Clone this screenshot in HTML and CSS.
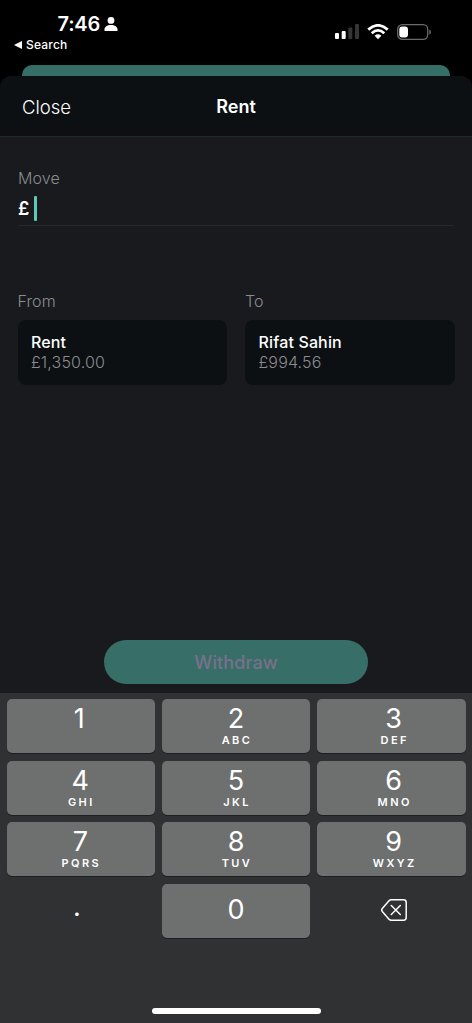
FILE: index.html
```html
<!DOCTYPE html>
<html lang="en">
<head>
<meta charset="utf-8">
<meta name="viewport" content="width=device-width, initial-scale=1">
<title>Rent</title>
<link rel="stylesheet" href="styles.css">
</head>
<body>
<div class="phone">
  <div class="status">
    <div class="status-left">
      <div class="clock"><span class="time">7:46</span>
        <svg class="person" width="14" height="14" viewBox="0 0 14 14"><circle cx="7" cy="3.400" r="3.400"/><path d="M.4 12.900C.4 9.900 3.200 8 7 8s6.600 1.900 6.600 4.900c0 .7-.4 1.100-1.100 1.100h-11C.8 14 .4 13.600 .4 12.900Z"/></svg>
      </div>
      <div class="back"><svg width="8" height="8" viewBox="0 0 8 8"><path d="M0 4 8 0v8Z"/></svg><span class="back-text">Search</span></div>
    </div>
    <div class="status-right">
      <svg width="24" height="16" viewBox="0 0 24 16"><rect x="0" y="9" width="4" height="6" rx="1"/><rect x="6.700" y="7" width="4" height="8" rx="1"/><g fill="#353535"><rect x="13.300" y="3.500" width="4" height="11.500" rx="1"/><rect x="20" y="0" width="4" height="15" rx="1"/></g></svg>
      <svg class="wifi" width="22" height="16" viewBox="0 0 22 16"><g fill="none" stroke="#fff" stroke-width="2.800"><path d="M1.300 5.600Q11-2.900 20.700 5.600"/><path d="M4.700 9.200Q11 3.600 17.300 9.200"/></g><path d="M7.600 11.700Q11 8.900 14.400 11.700L11 15.300Z"/></svg>
      <svg class="battery" width="35" height="16" viewBox="0 0 35 16"><rect x=".7" y=".7" width="30" height="14.600" rx="4.600" fill="none" stroke="#6b6b6b" stroke-width="1.300"/><rect x="2.300" y="2.500" width="8.700" height="11" rx="3"/><path d="M32.300 5.400c2.200.8 2.200 4.400 0 5.200Z" fill="#6b6b6b"/></svg>
    </div>
  </div>
  <div class="previous-sheet"></div>
  <main class="sheet">
    <header class="header"><span class="close">Close</span><span class="title">Rent</span><span></span></header>
    <section class="amount">
      <div class="label">Move</div>
      <div class="field"><span class="currency">£</span><span class="caret"></span></div>
    </section>
    <section class="accounts">
      <div class="account"><div class="label">From</div><div class="card"><div class="name">Rent</div><div class="balance">£1,350.00</div></div></div>
      <div class="account"><div class="label">To</div><div class="card"><div class="name">Rifat Sahin</div><div class="balance">£994.56</div></div></div>
    </section>
    <div class="withdraw">Withdraw</div>
  </main>
  <div class="keyboard">
    <div class="keys">
      <div class="key left"><span class="digit one">1</span></div>
      <div class="key"><span class="digit">2</span><span class="letters">ABC</span></div>
      <div class="key right"><span class="digit">3</span><span class="letters">DEF</span></div>
      <div class="key left"><span class="digit">4</span><span class="letters">GHI</span></div>
      <div class="key"><span class="digit">5</span><span class="letters">JKL</span></div>
      <div class="key right"><span class="digit">6</span><span class="letters">MNO</span></div>
      <div class="key left"><span class="digit">7</span><span class="letters">PQRS</span></div>
      <div class="key"><span class="digit">8</span><span class="letters">TUV</span></div>
      <div class="key right"><span class="digit">9</span><span class="letters">WXYZ</span></div>
      <div class="key plain"><span class="digit point">.</span></div>
      <div class="key zero"><span class="digit">0</span></div>
      <div class="key plain right"><svg class="delete" width="26" height="22" viewBox="0 0 26 22"><path d="M10.200.8H22.500Q25.200.8 25.200 3.500V18.500Q25.200 21.200 22.500 21.200H10.200Q9 21.200 8.200 20.400L1.300 12.500Q.2 11 1.300 9.500L8.200 1.600Q9 .8 10.200.8ZM10.300 6.500l9 9m0-9-9 9"/></svg></div>
    </div>
    <div class="home"></div>
  </div>
</div>
</body>
</html>
```
FILE: styles.css
```css
* { box-sizing: border-box; }
body { margin: 0; background: #000; font-family: Inter, "Liberation Sans", sans-serif; color: #fff; }
svg { display: block; fill: #fff; flex: none; }
.phone { width: 472px; height: 1023px; display: flex; flex-direction: column; overflow: hidden; background: #000; }
.status { height: 65px; display: flex; justify-content: space-between; padding: 0 40px 0 14px; flex: none; }
.clock { display: flex; align-items: center; height: 20px; margin: 14px 0 0 43.500px; gap: 4px; }
.time { font-size: 20px; line-height: 20px; font-weight: 600; letter-spacing: -0.200px; }
.back { display: flex; align-items: center; height: 14px; margin-top: 4px; gap: 4px; }
.back-text { font-size: 12px; line-height: 14px; font-weight: 500; letter-spacing: 0.200px; }
.status-right { display: flex; padding-top: 24px; }
.wifi { margin-left: 8px; }
.battery { margin-left: 8px; }
.previous-sheet { height: 11px; margin: 0 22px; background: #356e67; border-radius: 10px 10px 0 0; flex: none; }
.sheet { height: 617px; flex: none; display: flex; flex-direction: column; background: #191a1e; border-radius: 12px 12px 0 0; overflow: hidden; }
.header { height: 61px; display: grid; grid-template-columns: 1fr auto 1fr; align-items: center; padding: 1px 22px 0; background: #0c1013; border-bottom: 1px solid #25272a; font-size: 18px; line-height: 24px; }
.close { font-weight: 300; font-size: 18.500px; }
.title { font-weight: 600; padding-top: 1px; }
.amount { margin: 31px 18px 0; height: 58px; border-bottom: 1px solid #27282c; }
.label { font-size: 16px; line-height: 20px; font-weight: 300; color: #8b8c8f; letter-spacing: 0.100px; }
.field { display: flex; align-items: center; height: 25px; margin-top: 8px; gap: 5px; }
.currency { font-size: 18px; font-weight: 600; line-height: 24px; }
.caret { width: 2.500px; height: 25px; background: #5fc8b8; border-radius: 1px; }
.accounts { display: grid; grid-template-columns: 1fr 1fr; gap: 18px; margin: 65px 17.500px 0; }
.card { height: 65px; margin-top: 9px; padding: 12px 13.500px; border-radius: 8px; background: #0c1013; }
.name { font-size: 16px; line-height: 20px; font-weight: 500; letter-spacing: 0.150px; }
.balance { font-size: 16px; line-height: 20px; font-weight: 300; color: #8b8c8f; letter-spacing: 0.150px; }
.withdraw { width: 264px; height: 44px; margin: auto auto 9px; padding-top: 1px; border-radius: 22px; background: #376e67; color: #79718b; font-size: 18px; line-height: 44px; font-weight: 500; text-align: center; letter-spacing: 0.100px; }
.keyboard { height: 330px; flex: none; display: flex; flex-direction: column; justify-content: space-between; align-items: center; padding: 6px 6.500px 9px; background: #303133; }
.keys { width: 100%; display: grid; grid-template-columns: repeat(3, 1fr); grid-auto-rows: 54px; gap: 7.500px 6.600px; }
.key { display: flex; flex-direction: column; align-items: center; padding-top: 5px; border-radius: 5px; background: #6e706f; box-shadow: 0 1px 0 #1d1e1f; }
.digit { font-size: 27px; line-height: 29px; font-weight: 400; }
.letters { font-size: 11px; line-height: 14px; font-weight: 600; letter-spacing: 2.400px; padding-left: 2px; }
.left { padding-right: 1px; }
.one { padding-right: 2px; }
.right { padding-left: 5px; }
.plain { background: none; box-shadow: none; justify-content: center; padding-top: 0; padding-bottom: 2px; }
.zero { justify-content: center; padding: 0 0 2px; }
.point { padding: 0 8px 6px 0; }
.delete { fill: none; stroke: #fff; stroke-width: 1.500; stroke-linecap: round; stroke-linejoin: round; }
.home { width: 169px; height: 6px; border-radius: 3px; background: #fff; }
```
